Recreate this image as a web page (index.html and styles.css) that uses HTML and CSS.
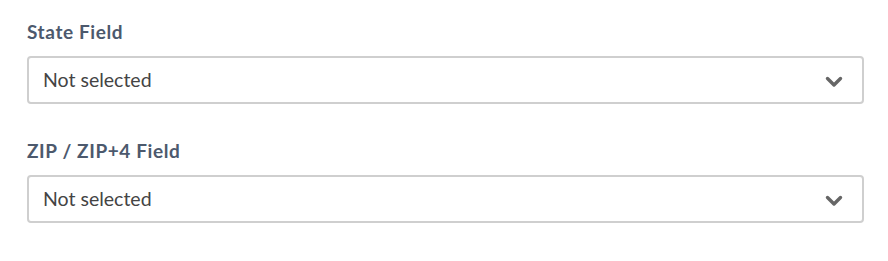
FILE: index.html
```html
<!DOCTYPE html>
<html>
<head>
<meta charset="utf-8">
<link rel="stylesheet" href="styles.css">
</head>
<body>
<div class="form">
  <div class="field">
    <div class="label">State Field</div>
    <div class="select">
      <span class="value">Not selected</span>
      <svg class="chev" width="18" height="12" viewBox="0 0 18 12"><path d="M2.5 2.5 L9 9 L15.5 2.5" fill="none" stroke="#666" stroke-width="3.4" stroke-linecap="round" stroke-linejoin="round"/></svg>
    </div>
  </div>
  <div class="field">
    <div class="label">ZIP / ZIP+4 Field</div>
    <div class="select">
      <span class="value">Not selected</span>
      <svg class="chev" width="18" height="12" viewBox="0 0 18 12"><path d="M2.5 2.5 L9 9 L15.5 2.5" fill="none" stroke="#666" stroke-width="3.4" stroke-linecap="round" stroke-linejoin="round"/></svg>
    </div>
  </div>
</div>
</body>
</html>
```

FILE: styles.css
```css
html, body {
  margin: 0;
  padding: 0;
  background: #fff;
}
body {
  font-family: Lato, "Open Sans", sans-serif;
}
.form {
  padding: 20px 24px 0 27px;
  display: flex;
  flex-direction: column;
  gap: 35px;
}
.field {
  display: flex;
  flex-direction: column;
}
.label {
  font-size: 19px;
  line-height: 24px;
  font-weight: 700;
  letter-spacing: 0.6px;
  color: #4c596d;
  margin-bottom: 12px;
}
.select {
  box-sizing: border-box;
  height: 48px;
  border: 2px solid #cfcfcf;
  border-radius: 4px;
  display: flex;
  align-items: center;
  justify-content: space-between;
  padding: 0 19px 0 14px;
}
.value {
  font-size: 19.5px;
  color: #444;
  margin-top: -2px;
}
.chev {
  display: block;
  margin-top: 4px;
}
```
